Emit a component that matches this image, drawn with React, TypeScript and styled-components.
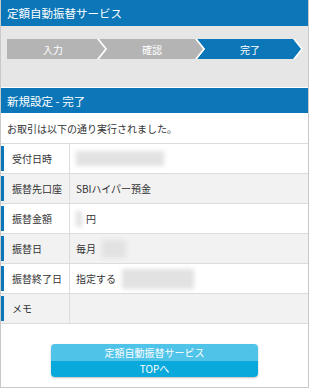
import React from 'react';
import styled, { createGlobalStyle } from 'styled-components';

const GlobalStyle = createGlobalStyle`
  html, body {
    margin: 0;
    padding: 0;
    background: #fff;
  }
  body {
    font-family: 'Noto Sans CJK JP', 'Liberation Sans', sans-serif;
    color: #333;
  }
`;

const Frame = styled.div`
  box-sizing: border-box;
  width: 309px;
  height: 388px;
  border: 1px solid #c9c9c9;
  border-top: none;
  display: flex;
  flex-direction: column;
  background: #fff;
`;

const Header = styled.div`
  height: 26px;
  background: #0b77b8;
  color: #fff;
  font-size: 11.5px;
  display: flex;
  align-items: center;
  padding-left: 6px;
`;

const StepArea = styled.div`
  height: 61px;
  background: #e6e6e6;
  border-bottom: 1px solid #fff;
  padding: 13px 0 0 6px;
  box-sizing: border-box;
  height: 62px;
  display: flex;
  align-items: flex-start;
`;

const Step = styled.div<{ $first?: boolean; $active?: boolean }>`
  position: relative;
  height: 20px;
  width: ${(p) => (p.$first ? 100 : 106)}px;
  margin-left: ${(p) => (p.$first ? 0 : -8)}px;
  background: #fff;
  clip-path: ${(p) =>
    p.$first
      ? 'polygon(0 0, calc(100% - 8px) 0, 100% 50%, calc(100% - 8px) 100%, 0 100%)'
      : 'polygon(0 0, calc(100% - 8px) 0, 100% 50%, calc(100% - 8px) 100%, 0 100%, 8px 50%)'};
  display: flex;
  align-items: center;
  justify-content: center;
  padding-left: ${(p) => (p.$first ? 0 : 8)}px;
  padding-right: 8px;
  box-sizing: border-box;
  color: #fff;
  font-size: 10px;

  &::before {
    content: '';
    position: absolute;
    inset: 0;
    background: ${(p) => (p.$active ? '#0b77b8' : '#b4b4b4')};
    clip-path: ${(p) =>
      p.$first
        ? 'polygon(0 0, calc(100% - 10px) 0, calc(100% - 2px) 50%, calc(100% - 10px) 100%, 0 100%)'
        : 'polygon(0 0, calc(100% - 10px) 0, calc(100% - 2px) 50%, calc(100% - 10px) 100%, 0 100%, 8px 50%)'};
  }

  span {
    position: relative;
  }
`;

const SectionHeader = styled.div`
  height: 25px;
  background: #0b77b8;
  color: #fff;
  font-size: 11.5px;
  display: flex;
  align-items: center;
  padding-left: 6px;
`;

const Message = styled.div`
  height: 30px;
  display: flex;
  align-items: center;
  padding-left: 6px;
  font-size: 10px;
  color: #333;
`;

const Table = styled.div`
  border-bottom: 1px solid #dcdcdc;
`;

const Row = styled.div<{ $shaded?: boolean }>`
  display: flex;
  height: 30px;
  box-sizing: border-box;
  border-top: 1px solid #dcdcdc;
  background: ${(p) => (p.$shaded ? '#f2f2f2' : '#fff')};
  font-size: 10px;
`;

const Label = styled.div`
  width: 68px;
  flex-shrink: 0;
  display: flex;
  align-items: center;
  border-right: 1px solid #dcdcdc;
`;

const Marker = styled.span`
  align-self: stretch;
  width: 3px;
  margin: 2px 0;
  background: #0b77b8;
`;

const LabelText = styled.span`
  margin-left: 8px;
`;

const Value = styled.div`
  flex: 1;
  display: flex;
  align-items: center;
  padding-left: 6px;
`;

const Blur = styled.span<{ $w: number; $h: number; $ml?: number; $mr?: number }>`
  display: inline-block;
  width: ${(p) => p.$w}px;
  height: ${(p) => p.$h}px;
  margin-left: ${(p) => p.$ml ?? 0}px;
  margin-right: ${(p) => p.$mr ?? 0}px;
  background: #e2e2e2;
  filter: blur(2px);
`;

const ButtonArea = styled.div`
  display: flex;
  justify-content: center;
  padding-top: 20px;
`;

const TopButton = styled.button`
  width: 207px;
  height: 33px;
  padding: 0;
  border: none;
  border-radius: 4px;
  overflow: hidden;
  display: flex;
  flex-direction: column;
  box-shadow: 0 1px 2px rgba(0, 0, 0, 0.25);
  font-family: 'Noto Sans CJK JP', 'Liberation Sans', sans-serif;
  font-size: 10px;
  color: #fff;
  cursor: pointer;
`;

const ButtonHalf = styled.span<{ $top?: boolean }>`
  flex: 1;
  display: flex;
  align-items: center;
  justify-content: center;
  background: ${(p) => (p.$top ? '#4fc3e8' : '#0aa9dc')};
`;

export default function App() {
  return (
    <>
      <GlobalStyle />
      <Frame>
        <Header>定額自動振替サービス</Header>
        <StepArea>
          <Step $first>
            <span>入力</span>
          </Step>
          <Step>
            <span>確認</span>
          </Step>
          <Step $active>
            <span>完了</span>
          </Step>
        </StepArea>
        <SectionHeader>新規設定 - 完了</SectionHeader>
        <Message>お取引は以下の通り実行されました。</Message>
        <Table>
          <Row>
            <Label>
              <Marker />
              <LabelText>受付日時</LabelText>
            </Label>
            <Value>
              <Blur $w={88} $h={15} />
            </Value>
          </Row>
          <Row $shaded>
            <Label>
              <Marker />
              <LabelText>振替先口座</LabelText>
            </Label>
            <Value>SBIハイパー預金</Value>
          </Row>
          <Row>
            <Label>
              <Marker />
              <LabelText>振替金額</LabelText>
            </Label>
            <Value>
              <Blur $w={6} $h={16} $mr={4} />円
            </Value>
          </Row>
          <Row $shaded>
            <Label>
              <Marker />
              <LabelText>振替日</LabelText>
            </Label>
            <Value>
              毎月
              <Blur $w={24} $h={18} $ml={6} />
            </Value>
          </Row>
          <Row>
            <Label>
              <Marker />
              <LabelText>振替終了日</LabelText>
            </Label>
            <Value>
              指定する
              <Blur $w={72} $h={20} $ml={6} />
            </Value>
          </Row>
          <Row $shaded>
            <Label>
              <Marker />
              <LabelText>メモ</LabelText>
            </Label>
            <Value />
          </Row>
        </Table>
        <ButtonArea>
          <TopButton>
            <ButtonHalf $top>定額自動振替サービス</ButtonHalf>
            <ButtonHalf>TOPへ</ButtonHalf>
          </TopButton>
        </ButtonArea>
      </Frame>
    </>
  );
}
